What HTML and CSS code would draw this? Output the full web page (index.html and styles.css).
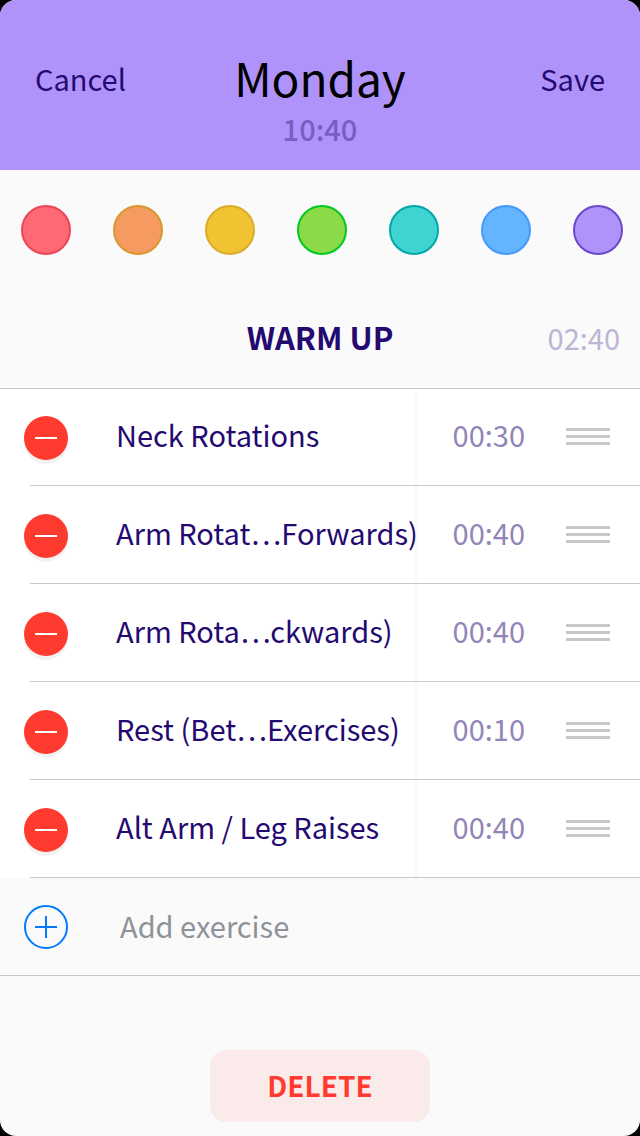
FILE: index.html
```html
<!DOCTYPE html>
<html lang="en">
<head>
  <meta charset="UTF-8" />
  <meta name="viewport" content="width=device-width, initial-scale=1.0" />
  <title>Edit Workout</title>
  <link rel="stylesheet" href="styles.css">
</head>
<body>
  <svg class="sprite" aria-hidden="true">
    <symbol id="icon-remove" viewBox="0 0 44 48">
      <circle cx="22" cy="26" r="22" fill="#f2f2f2" />
      <circle cx="22" cy="22" r="22" fill="#ff3b30" />
      <path d="M11 22h22" stroke="#fff" stroke-width="2" />
    </symbol>
    <symbol id="icon-add" viewBox="0 0 44 44">
      <circle cx="22" cy="22" r="21" fill="none" stroke="#007aff" stroke-width="2" />
      <path d="M11 22h22M22 11v22" stroke="#007aff" stroke-width="2" />
    </symbol>
    <symbol id="icon-drag" viewBox="0 0 44 17">
      <path d="M0 1.5h44M0 8.5h44M0 15.5h44" stroke="#c7c7cc" stroke-width="3" />
    </symbol>
  </svg>

  <main class="screen">
    <header class="topbar">
      <button type="button" class="topbar-btn">Cancel</button>
      <h1 class="title">Monday</h1>
      <button type="button" class="topbar-btn save">Save</button>
      <p class="total">10:40</p>
    </header>

    <div class="swatches" role="radiogroup" aria-label="Color">
      <input type="radio" name="color" class="swatch red" aria-label="Red" />
      <input type="radio" name="color" class="swatch orange" aria-label="Orange" />
      <input type="radio" name="color" class="swatch yellow" aria-label="Yellow" />
      <input type="radio" name="color" class="swatch green" aria-label="Green" />
      <input type="radio" name="color" class="swatch teal" aria-label="Teal" />
      <input type="radio" name="color" class="swatch blue" aria-label="Blue" />
      <input type="radio" name="color" class="swatch purple" aria-label="Purple" checked />
    </div>

    <section>
      <div class="section-head">
        <h2 class="section-title">WARM UP</h2>
        <span class="section-time">02:40</span>
      </div>

      <ul class="exercises">
        <li class="row">
          <button type="button" class="icon-btn remove" aria-label="Remove"><svg width="44" height="48"><use href="#icon-remove" /></svg></button>
          <span class="name">Neck Rotations</span>
          <span class="time">00:30</span>
          <button type="button" class="icon-btn" aria-label="Reorder"><svg width="44" height="17"><use href="#icon-drag" /></svg></button>
        </li>
        <li class="row">
          <button type="button" class="icon-btn remove" aria-label="Remove"><svg width="44" height="48"><use href="#icon-remove" /></svg></button>
          <span class="name">Arm Rotat…Forwards)</span>
          <span class="time">00:40</span>
          <button type="button" class="icon-btn" aria-label="Reorder"><svg width="44" height="17"><use href="#icon-drag" /></svg></button>
        </li>
        <li class="row">
          <button type="button" class="icon-btn remove" aria-label="Remove"><svg width="44" height="48"><use href="#icon-remove" /></svg></button>
          <span class="name">Arm Rota…ckwards)</span>
          <span class="time">00:40</span>
          <button type="button" class="icon-btn" aria-label="Reorder"><svg width="44" height="17"><use href="#icon-drag" /></svg></button>
        </li>
        <li class="row">
          <button type="button" class="icon-btn remove" aria-label="Remove"><svg width="44" height="48"><use href="#icon-remove" /></svg></button>
          <span class="name">Rest (Bet…Exercises)</span>
          <span class="time">00:10</span>
          <button type="button" class="icon-btn" aria-label="Reorder"><svg width="44" height="17"><use href="#icon-drag" /></svg></button>
        </li>
        <li class="row">
          <button type="button" class="icon-btn remove" aria-label="Remove"><svg width="44" height="48"><use href="#icon-remove" /></svg></button>
          <span class="name">Alt Arm / Leg Raises</span>
          <span class="time">00:40</span>
          <button type="button" class="icon-btn" aria-label="Reorder"><svg width="44" height="17"><use href="#icon-drag" /></svg></button>
        </li>
      </ul>

      <div class="add-row">
        <button type="button" class="icon-btn" aria-label="Add"><svg width="44" height="44"><use href="#icon-add" /></svg></button>
        <input type="text" class="add-input" placeholder="Add exercise" aria-label="Add exercise" />
      </div>
    </section>

    <button type="button" class="delete">DELETE</button>
  </main>
</body>
</html>
```

FILE: styles.css
```css
* {
  box-sizing: border-box;
}
body {
  margin: 0;
  background: #000;
  color: #240a70;
  font-family: "Noto Sans CJK KR", "Noto Sans", sans-serif;
  font-size: 29px;
  line-height: 40px;
}
h1, h2, p, ul {
  margin: 0;
  padding: 0;
}
button, input {
  margin: 0;
  padding: 0;
  border: none;
  background: none;
  color: inherit;
  font: inherit;
}
button {
  cursor: pointer;
}
.sprite {
  display: none;
}
.screen {
  display: flex;
  flex-direction: column;
  min-height: 100vh;
  background: #fafafa;
  border-radius: 16px;
  overflow: hidden;
}

/* top bar */
.topbar {
  display: grid;
  grid-template-columns: 1fr auto 1fr;
  align-items: center;
  padding: 46px 35px 22px;
  background: #af93fa;
}
.topbar-btn {
  justify-self: start;
  padding-top: 2px;
}
.topbar-btn.save {
  justify-self: end;
}
.title {
  color: #000;
  font-size: 46px;
  font-weight: 400;
  line-height: 62px;
}
.total {
  grid-column: 2;
  color: #7a5cc4;
  font-weight: 500;
  text-align: center;
}

/* color picker */
.swatches {
  display: flex;
  justify-content: space-between;
  padding: 35px 17px 35px 21px;
}
.swatch {
  appearance: none;
  width: 50px;
  height: 50px;
  border: 2px solid;
  border-radius: 50%;
  cursor: pointer;
}
.red { background: #ff6875; border-color: #ed4556; }
.orange { background: #f59a61; border-color: #d9982f; }
.yellow { background: #f1c232; border-color: #dbac2c; }
.green { background: #8cda48; border-color: #00c921; }
.teal { background: #3fd4d2; border-color: #00a8a8; }
.blue { background: #65b4ff; border-color: #4499fc; }
.purple { background: #af93fa; border-color: #6b48cc; }

/* exercise list */
.section-head {
  position: relative; /* keeps the border above the first row */
  display: grid;
  grid-template-columns: 1fr auto 1fr;
  align-items: center;
  margin-bottom: -1px;
  padding: 27px 20px 31px;
  border-bottom: 1px solid #c8c7cc;
}
.section-title {
  grid-column: 2;
  font-size: 31px;
  font-weight: 700;
  line-height: 40px;
}
.section-time {
  justify-self: end;
  color: #bdb5d4;
}
.exercises {
  list-style: none;
  background: #fff;
}
.row {
  display: flex;
  align-items: stretch;
  height: 98px;
  padding: 0 30px 1px 24px;
  background: linear-gradient(#c8c7cc, #c8c7cc) right bottom / calc(100% - 30px) 1px no-repeat;
}
.icon-btn {
  display: flex;
  align-items: center;
}
.remove {
  padding-top: 7px;
}
.name {
  flex: 1;
  min-width: 0;
  margin-left: 48px;
  padding: 26px 0;
  border-right: 4px solid #fafafa;
  white-space: nowrap;
}
.time {
  padding: 26px 41px 26px 35px;
  color: #9285b8;
}
.add-row {
  display: flex;
  align-items: center;
  height: 98px;
  padding: 0 24px;
  gap: 52px;
  border-bottom: 1px solid #c8c7cc;
}
.add-input {
  flex: 1;
  min-width: 0;
  height: 44px;
  padding-bottom: 4px;
}
.add-input::placeholder {
  color: #8e9399;
  opacity: 1;
}

.delete {
  align-self: center;
  width: 220px;
  height: 72px;
  margin: auto 0 14px;
  padding-bottom: 2px;
  border-radius: 16px;
  background: #faebea;
  color: #ff3b30;
  font-size: 28px;
  font-weight: 700;
}
```
